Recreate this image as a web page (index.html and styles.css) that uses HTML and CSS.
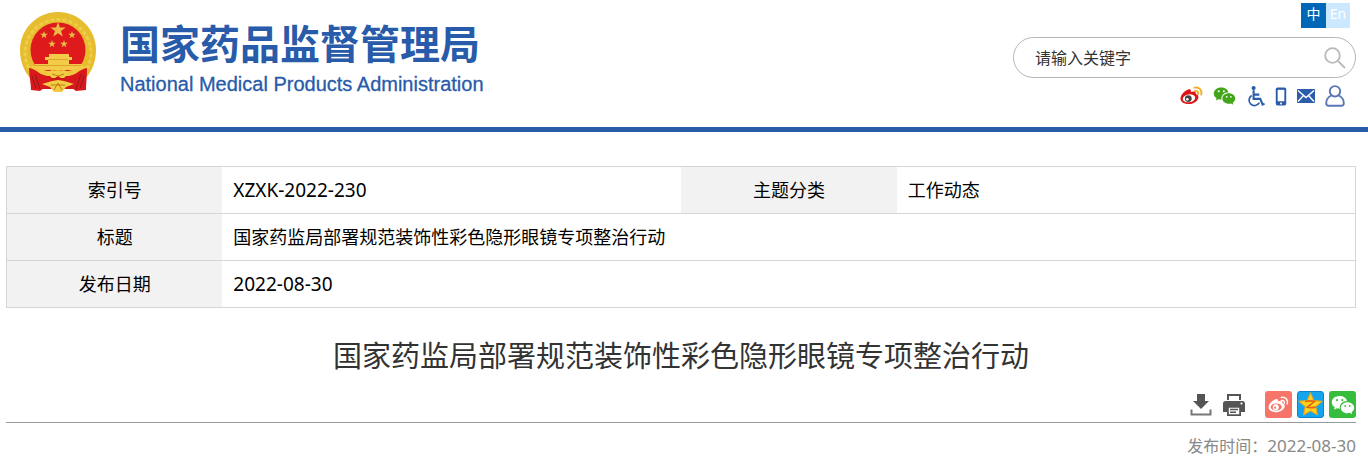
FILE: index.html
```html
<!DOCTYPE html>
<html lang="zh-CN">
<head>
<meta charset="utf-8">
<meta name="viewport" content="width=device-width, initial-scale=1">
<title>国家药监局部署规范装饰性彩色隐形眼镜专项整治行动</title>
<link rel="stylesheet" href="styles.css">
</head>
<body>
<svg class="defs" aria-hidden="true">
  <defs>
    <symbol id="star" viewBox="-10 -10 20 20"><path d="M0-10 2.4-3.2 9.5-3.1 3.8 1.2 5.9 8.1 0 4-5.9 8.1-3.8 1.2-9.5-3.1-2.4-3.2z"/></symbol>
    <symbol id="wechat" viewBox="0 0 24 20">
      <path fill-rule="evenodd" d="M8.500 1C4 1 .8 3.800.8 7.300c0 2.100 1.100 3.800 2.900 5L3 14.800l2.900-1.500c1 .3 2 .4 3 .4C8.200 9.400 11.500 6 16.100 6 15.400 3 12.300 1 8.500 1zM6 4a1.100 1.100 0 1 1 0 2.200A1.100 1.100 0 0 1 6 4zm5.300 0a1.100 1.100 0 1 1 0 2.200 1.100 1.100 0 0 1 0-2.200z"/>
      <path fill-rule="evenodd" d="M16.500 7.200c-3.900 0-6.700 2.500-6.700 5.500s2.900 5.500 6.700 5.500c.8 0 1.600-.1 2.300-.4l2.400 1.400-.6-2.200c1.600-1 2.600-2.600 2.600-4.300 0-3-2.800-5.500-6.700-5.500zM14.300 10a.9.9 0 1 1 0 1.800.9.900 0 0 1 0-1.800zm4.400 0a.9.9 0 1 1 0 1.800.9.900 0 0 1 0-1.800z"/>
    </symbol>
  </defs>
</svg>

<header class="header">
  <a class="brand" href="#">
    <svg class="emblem" viewBox="0 0 76 82" aria-hidden="true">
      <path fill="#e6bd2e" d="M38 0C17 0 0 17 0 38c0 14 6 25 14 32h48c8-7 14-18 14-32C76 17 59 0 38 0z"/>
      <path fill="none" stroke="#efcd48" stroke-width="3" stroke-dasharray="4 2" d="M12 61A33 33 0 1 1 64 61"/>
      <circle cx="38" cy="38" r="27.500" fill="#df1a1c"/>
      <g fill="#e9bd45">
        <use href="#star" x="30" y="10" width="16" height="16"/>
        <use href="#star" x="20" y="19" width="8" height="8"/><use href="#star" x="48" y="19" width="8" height="8"/>
        <use href="#star" x="28" y="28" width="8" height="8"/><use href="#star" x="40" y="28" width="8" height="8"/>
        <path fill="#f4cb48" d="M29 42h20v3h3v3h-3v4h13v2h4l-3 5H14l-3-5h4v-2h13v-4h-3v-3h4z"/>
      </g>
      <path fill="none" stroke="#dba52c" d="M15 53.500h46M28 47.500h20"/>
      <path fill="#cf171b" d="M12 58h52l-8 19H20z"/>
      <path fill="#f0c83d" d="M11 55l17 4 10-1 10 1 17-4-6 6-10 3H27l-10-3z"/>
      <path fill="#d8181c" d="M9 56c6 1 10 5 15 8l8 1-4 8-8 6-9-1c0-7-2-14-2-22zM67 56c-6 1-10 5-15 8l-8 1 4 8 8 6 10-1c0-7 1-14 1-22z"/>
      <path fill="none" stroke="#92191a" d="m15 62 5 15m-8-13 4 12m45-14-5 15m8-13-4 12"/>
      <path fill="#f2cc42" d="m27 61 5-3 6 2 6-2 5 3-5 5h-3l-3-2-3 2h-3zM22 72l10-3 6-1 6 1 10 3-8 3-4 5h-8l-4-5z"/>
      <path fill="none" stroke="#bd7d17" d="M31 73h14M34 78l4-7 4 7M32 62l6 2 6-2"/>
    </svg>
    <span class="names">
      <span class="name-zh">国家药品监督管理局</span>
      <span class="name-en" lang="en">National Medical Products Administration</span>
    </span>
  </a>

  <div class="tools">
    <nav class="langs" aria-label="语言">
      <a class="lang lang-on" href="#">中</a><a class="lang" href="#" lang="en">En</a>
    </nav>
    <form class="search" role="search">
      <input class="search-input" type="text" placeholder="请输入关键字" aria-label="请输入关键字">
      <button class="search-btn" type="button" aria-label="搜索">
        <svg viewBox="0 0 22 22" width="22" height="22" fill="none" stroke="#b9b9b9" stroke-width="1.800"><circle cx="8.500" cy="8.500" r="7.300"/><path d="m14 14 7 7"/></svg>
      </button>
    </form>
    <nav class="quick" aria-label="快捷入口">
      <a href="#" aria-label="微博"><svg width="23" height="20" viewBox="0 0 23 20">
        <path fill="#df1416" d="M8 3.500c2-.8 3.500 0 2.900 2.500 3-1.200 5.600-.7 4.900 2 2 .6 3 2 2.500 3.900-.8 3.500-5 6.100-9.800 6.100C3.800 18 .5 15.800.5 12.500.5 9 4.500 5 8 3.500z"/>
        <ellipse cx="9" cy="12.300" rx="6.300" ry="3.900" fill="#fff" transform="rotate(-8 9 12.300)"/>
        <circle cx="8.300" cy="12.600" r="3.400" fill="#444"/><circle cx="7.300" cy="13.300" r="1.300" fill="#fff"/>
        <path fill="none" stroke="#efac25" stroke-width="1.900" stroke-linecap="round" d="M14.500 1.600c4.500-.8 8 2.500 6.700 7M15 4.900c2-.3 3.500 1 3 3"/></svg></a>
      <a href="#" aria-label="微信"><svg width="23" height="20" fill="#43a518"><use href="#wechat"/></svg></a>
      <a href="#" aria-label="无障碍"><svg width="19" height="23" viewBox="0 0 20 23" fill="none" stroke="#2b5dab" stroke-width="2.200">
        <circle cx="8" cy="2.600" r="2.200" fill="#2b5dab" stroke="none"/><path d="M8 5v9h7l2.500 6 2-1M8 9.500h6"/><path stroke-width="1.800" d="M6 10.500a5.700 5.700 0 1 0 8 7.500"/></svg></a>
      <a href="#" aria-label="手机版"><svg width="12" height="19" viewBox="0 0 12 20">
        <rect x=".5" y=".5" width="11" height="19" rx="1.800" fill="#2b5dab"/><path fill="#fff" d="M2.500 3h7v12h-7z"/><circle cx="6" cy="17.300" r="1" fill="#fff"/></svg></a>
      <a href="#" aria-label="邮箱"><svg width="18" height="14" viewBox="0 0 18 14">
        <rect width="18" height="14" rx="1" fill="#2b5dab"/><path fill="none" stroke="#fff" stroke-width="1.400" d="m1 1.500 8 7 8-7M1 12.500l5.500-6m10.500 6-5.500-6"/></svg></a>
      <a href="#" aria-label="用户"><svg width="20" height="22" viewBox="0 0 20 22" fill="none" stroke="#5a75b8" stroke-width="1.900">
        <circle cx="10" cy="6.300" r="5.200"/><path d="M6.300 10.500C3 12 1.200 14.500 1.200 18c0 2 .8 2.800 2.500 2.800h12.600c1.700 0 2.500-.8 2.500-2.800 0-3.500-1.800-6-5.100-7.500"/></svg></a>
    </nav>
  </div>
</header>

<main class="main">
  <table class="info">
    <colgroup><col class="c-key"><col class="c-val"><col class="c-key"><col class="c-val"></colgroup>
    <tbody>
      <tr><th scope="row">索引号</th><td><span class="num">XZXK-2022-230</span></td><th scope="row">主题分类</th><td>工作动态</td></tr>
      <tr><th scope="row">标题</th><td colspan="3">国家药监局部署规范装饰性彩色隐形眼镜专项整治行动</td></tr>
      <tr><th scope="row">发布日期</th><td colspan="3"><span class="num">2022-08-30</span></td></tr>
    </tbody>
  </table>

  <h1 class="title">国家药监局部署规范装饰性彩色隐形眼镜专项整治行动</h1>

  <div class="actions">
    <button class="act" type="button" aria-label="下载"><svg width="22" height="22" viewBox="0 0 22 22" fill="#555">
      <path d="M7 0h8v7h4l-8 8-8-8h4z"/><path fill="none" stroke="#777" stroke-width="2" d="M1.500 15.500v5h19v-5"/></svg></button>
    <button class="act print" type="button" aria-label="打印"><svg width="22" height="22" viewBox="0 0 22 22">
      <path fill="#555" d="M4 0h14v6H4zM2.500 7h17C21 7 22 8 22 9.500V18h-4v-5H4v5H0V9.500C0 8 1 7 2.500 7z"/><path fill="#fff" d="M6 2h10v4H6z"/><circle cx="18.500" cy="9.500" r="1.100" fill="#fff"/>
      <path fill="#fff" stroke="#555" stroke-width="1.800" d="M4.900 12.900h12.200v8.200H4.900z"/><path stroke="#555" stroke-width="1.500" d="M7 15.500h8M7 18.300h6"/></svg></button>
    <a class="share weibo" href="#" aria-label="分享到微博"><svg width="21" height="18" viewBox="0 0 23 20">
      <path fill="#fff" d="M8 3.500c2-.8 3.500 0 2.900 2.500 3-1.200 5.600-.7 4.900 2 2 .6 3 2 2.500 3.900-.8 3.500-5 6.100-9.800 6.100C3.800 18 .5 15.800.5 12.500.5 9 4.500 5 8 3.500z"/>
      <ellipse cx="9" cy="12.300" rx="6.200" ry="3.900" fill="#f67568"/><circle cx="8.500" cy="12.400" r="3.300" fill="#fff"/><circle cx="7.700" cy="13" r="1.200" fill="#f67568"/>
      <path fill="none" stroke="#fff" stroke-width="1.600" stroke-linecap="round" d="M14.500 1.600c4.500-.8 8 2.500 6.700 7M15 4.900c2-.3 3.500 1 3 3"/></svg></a>
    <a class="share qzone" href="#" aria-label="分享到空间"><svg width="25" height="25" viewBox="-12 -12 24 24">
      <path fill="#fdd51f" stroke="#f4a616" stroke-linejoin="round" d="M0-11 3.100-3.800 11-3 5 2 6.600 10 0 6-6.600 10-5 2-11-3-3.100-3.800z"/><path fill="none" stroke="#df6913" stroke-width="1.700" d="M-5-2.700c3-1 6-.8 9-.3l-7 5.500c3 .8 5 .7 8 0"/></svg></a>
    <a class="share weixin" href="#" aria-label="分享到微信"><svg width="24" height="20" fill="#fff"><use href="#wechat"/></svg></a>
  </div>
  <p class="date">发布时间<span class="colon">：</span><span class="date-num">2022-08-30</span></p>
</main>
</body>
</html>
```
FILE: styles.css
```css
* { box-sizing: border-box; }
body {
  margin: 0;
  background: #fff;
  color: #000;
  font-family: "Noto Sans", "Noto Sans CJK SC", sans-serif;
  font-size: 18px;
}
a { color: inherit; text-decoration: none; }
button { border: 0; padding: 0; background: none; cursor: pointer; }
svg { display: block; }
.defs { position: absolute; width: 0; height: 0; }

.header {
  display: flex;
  justify-content: space-between;
  min-height: 132px;
  padding: 3px 12px 0 20px;
  border-bottom: 5px solid #285ba9;
}
.brand {
  display: flex;
  align-self: flex-start;
  gap: 24px;
  padding-top: 9px;
  color: #285ba9;
}
.emblem { width: 76px; height: 82px; }
.names { display: flex; flex-direction: column; gap: 2px; }
.name-zh {
  font: 700 40px/60px "Noto Sans CJK SC", sans-serif;
}
.name-en {
  font: 400 20px/20px "Liberation Sans", Arial, sans-serif;
  -webkit-text-stroke: 0.3px #285ba9;
}

.tools { display: flex; flex-direction: column; align-items: flex-end; width: 343px; }
.langs { display: flex; margin-right: 6px; }
.lang {
  width: 24px;
  height: 25px;
  background: #cce8ff;
  color: #fff;
  font-size: 14px;
  line-height: 22px;
  text-align: center;
}
.lang-on { width: 25px; background: #0068b7; }
.search {
  display: flex;
  align-items: center;
  width: 100%;
  height: 41px;
  margin-top: 9px;
  padding: 0 9px 0 21px;
  border: 1px solid #b5b5b5;
  border-radius: 21px;
}
.search-input {
  flex: 1;
  min-width: 0;
  border: 0;
  padding: 0;
  outline: 0;
  background: none;
  font: 16px "Noto Sans", "Noto Sans CJK SC", sans-serif;
}
.search-input::placeholder { color: #333; opacity: 1; }
.quick {
  display: flex;
  align-items: center;
  gap: 10px;
  height: 24px;
  margin: 6px 11px 0 0;
}

.main { padding: 34px 12px 0 6px; }
.info {
  width: 100%;
  table-layout: fixed;
  border: 1px solid #d6d6d6;
  border-collapse: collapse;
}
.c-key { width: 16%; }
.c-val { width: 34%; }
.info tr { height: 47px; border-bottom: 1px solid #d6d6d6; }
.info th, .info td { padding: 0 11px; line-height: 26px; font-weight: 400; }
.info th { background: #f2f2f2; text-align: center; }
.info td { text-align: left; }
.num { font-size: 19px; }

.title {
  margin: 26px 0 0;
  color: #333;
  font-size: 29px;
  font-weight: 400;
  line-height: 44px;
  text-align: center;
}
.actions {
  display: flex;
  align-items: center;
  justify-content: flex-end;
  margin-top: 13px;
  padding-bottom: 4px;
  border-bottom: 1px solid #999;
}
.print { margin: 0 20px 0 11px; }
.share {
  display: flex;
  align-items: center;
  justify-content: center;
  width: 27px;
  height: 27px;
  border-radius: 3px;
}
.share + .share { margin-left: 5px; }
.weibo { background: #f67568; }
.qzone { border: 1px solid #0b83d0; background: #14a5ed; }
.weixin { background: #36bd3c; }
.date {
  margin: 10px 0 0;
  color: #888;
  font-size: 16px;
  line-height: 24px;
  text-align: right;
}
.colon { font-family: "Noto Sans CJK TC", sans-serif; }
.date-num { font-size: 17px; }
```
